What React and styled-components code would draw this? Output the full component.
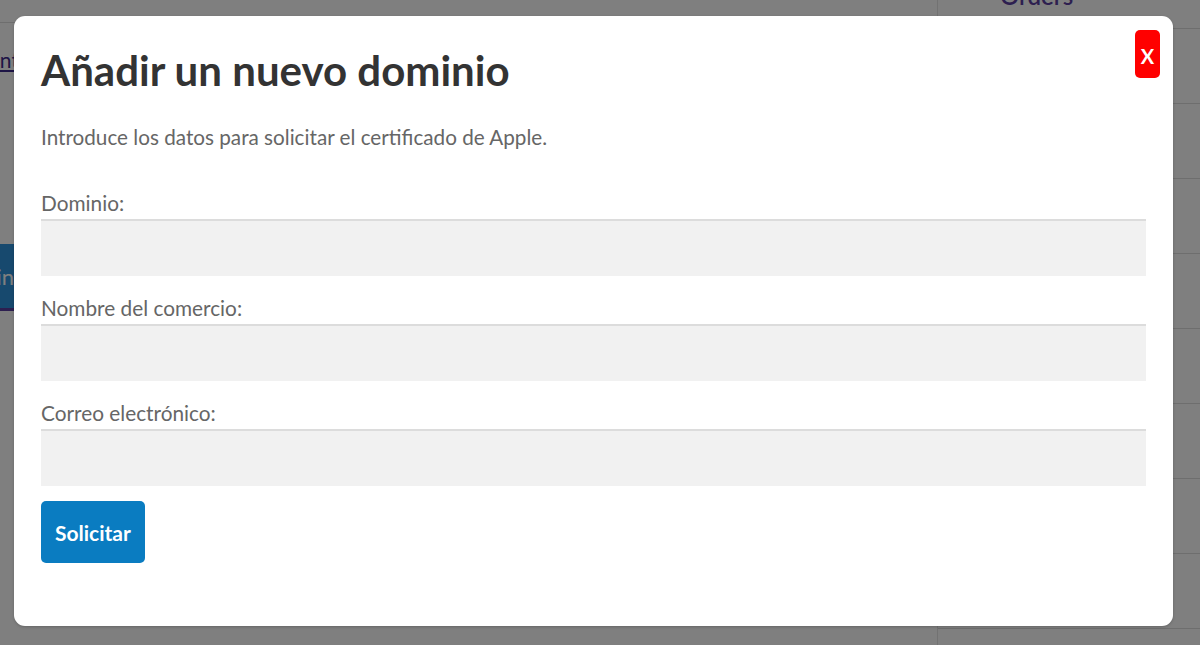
import React from 'react'
import styled, { createGlobalStyle } from 'styled-components'

const GlobalStyle = createGlobalStyle`
  html, body {
    margin: 0;
    padding: 0;
    width: 1200px;
    height: 645px;
    overflow: hidden;
    background: #fff;
    font-family: Lato, "Open Sans", "Liberation Sans", sans-serif;
  }
`

const Page = styled.div`
  position: relative;
  width: 1200px;
  height: 645px;
  display: flex;
  background: #fff;
`

const MainArea = styled.div`
  flex: 1;
  display: flex;
  flex-direction: column;
  align-items: flex-start;
  border-top: 1px solid #ddd;
  margin-top: 22px;
`

const BackLink = styled.a`
  margin-top: 24px;
  margin-left: -56px;
  color: #3c2a8c;
  font-size: 21px;
  text-decoration: underline;
`

const BackButton = styled.div`
  margin-top: 172px;
  width: 200px;
  margin-left: -182px;
  height: 67px;
  background: #2e93dc;
  border-bottom: 3px solid #5a3fa0;
  color: #fff;
  font-size: 22px;
  display: flex;
  align-items: center;
  justify-content: flex-end;
  padding-right: 4px;
  box-sizing: border-box;
`

const Sidebar = styled.aside`
  width: 262px;
  border-left: 1px solid #e4e4e4;
  display: flex;
  flex-direction: column;
  margin-top: -46px;
`

const SideItem = styled.div`
  height: 75px;
  flex-shrink: 0;
  box-sizing: border-box;
  border-bottom: 1px solid #ddd;
  display: flex;
  align-items: ${(p) => (p.$top ? 'flex-end' : 'center')};
  padding: 0 0 ${(p) => (p.$top ? '20px' : '0')} 62px;
  color: #5a3fa0;
  font-size: 24px;
  line-height: 24px;
  font-weight: 600;
`

const Overlay = styled.div`
  position: absolute;
  inset: 0;
  background: rgba(0, 0, 0, 0.5);
  display: flex;
  align-items: flex-start;
  padding: 16px 0 0 14px;
  box-sizing: border-box;
`

const Modal = styled.div`
  position: relative;
  width: 1159px;
  box-sizing: border-box;
  background: #fff;
  border-radius: 11px;
  padding: 30px 27px 63px 27px;
  box-shadow: 0 1px 3px rgba(0, 0, 0, 0.2);
`

const CloseButton = styled.button`
  position: absolute;
  top: 14px;
  right: 13px;
  width: 25px;
  height: 48px;
  border: none;
  border-radius: 5px;
  background: #ff0000;
  color: #fff;
  font-family: inherit;
  font-weight: 700;
  font-size: 20px;
  padding: 4px 0 0;
  cursor: pointer;
`

const Title = styled.h2`
  margin: 0;
  font-size: 42px;
  line-height: 48px;
  font-weight: 700;
  color: #333;
`

const Intro = styled.p`
  margin: 31px 0 36px;
  font-size: 20.7px;
  line-height: 24px;
  color: #666;
`

const Form = styled.form`
  display: flex;
  flex-direction: column;
  gap: 14px;
  align-items: flex-start;
`

const Field = styled.div`
  width: 100%;
  display: flex;
  flex-direction: column;
  gap: 4px;
`

const Label = styled.label`
  padding-top: 6px;
  font-size: 20.8px;
  line-height: 24px;
  color: #666;
`

const Input = styled.input`
  width: 100%;
  height: 57px;
  box-sizing: border-box;
  border: none;
  border-top: 2px solid #dcdcdc;
  background: #f1f1f1;
  font-family: inherit;
  font-size: 18px;
  padding: 0 12px;
  outline: none;
`

const Submit = styled.button`
  margin-top: 1px;
  height: 62px;
  padding: 0 14px;
  border: none;
  border-radius: 5px;
  background: #0a7cc1;
  color: #fff;
  font-family: inherit;
  font-weight: 700;
  font-size: 21px;
  cursor: pointer;
`

const fields = ['Dominio:', 'Nombre del comercio:', 'Correo electrónico:']

export default function App() {
  return (
    <>
      <GlobalStyle />
      <Page>
        <MainArea>
          <BackLink href="#">Content</BackLink>
          <BackButton>Domin</BackButton>
        </MainArea>
        <Sidebar>
          <SideItem $top>Orders</SideItem>
          {Array.from({ length: 8 }).map((_, i) => (
            <SideItem key={i} />
          ))}
        </Sidebar>
        <Overlay>
          <Modal>
            <CloseButton type="button">X</CloseButton>
            <Title>Añadir un nuevo dominio</Title>
            <Intro>Introduce los datos para solicitar el certificado de Apple.</Intro>
            <Form onSubmit={(e) => e.preventDefault()}>
              {fields.map((f) => (
                <Field key={f}>
                  <Label>{f}</Label>
                  <Input type="text" />
                </Field>
              ))}
              <Submit type="submit">Solicitar</Submit>
            </Form>
          </Modal>
        </Overlay>
      </Page>
    </>
  )
}
